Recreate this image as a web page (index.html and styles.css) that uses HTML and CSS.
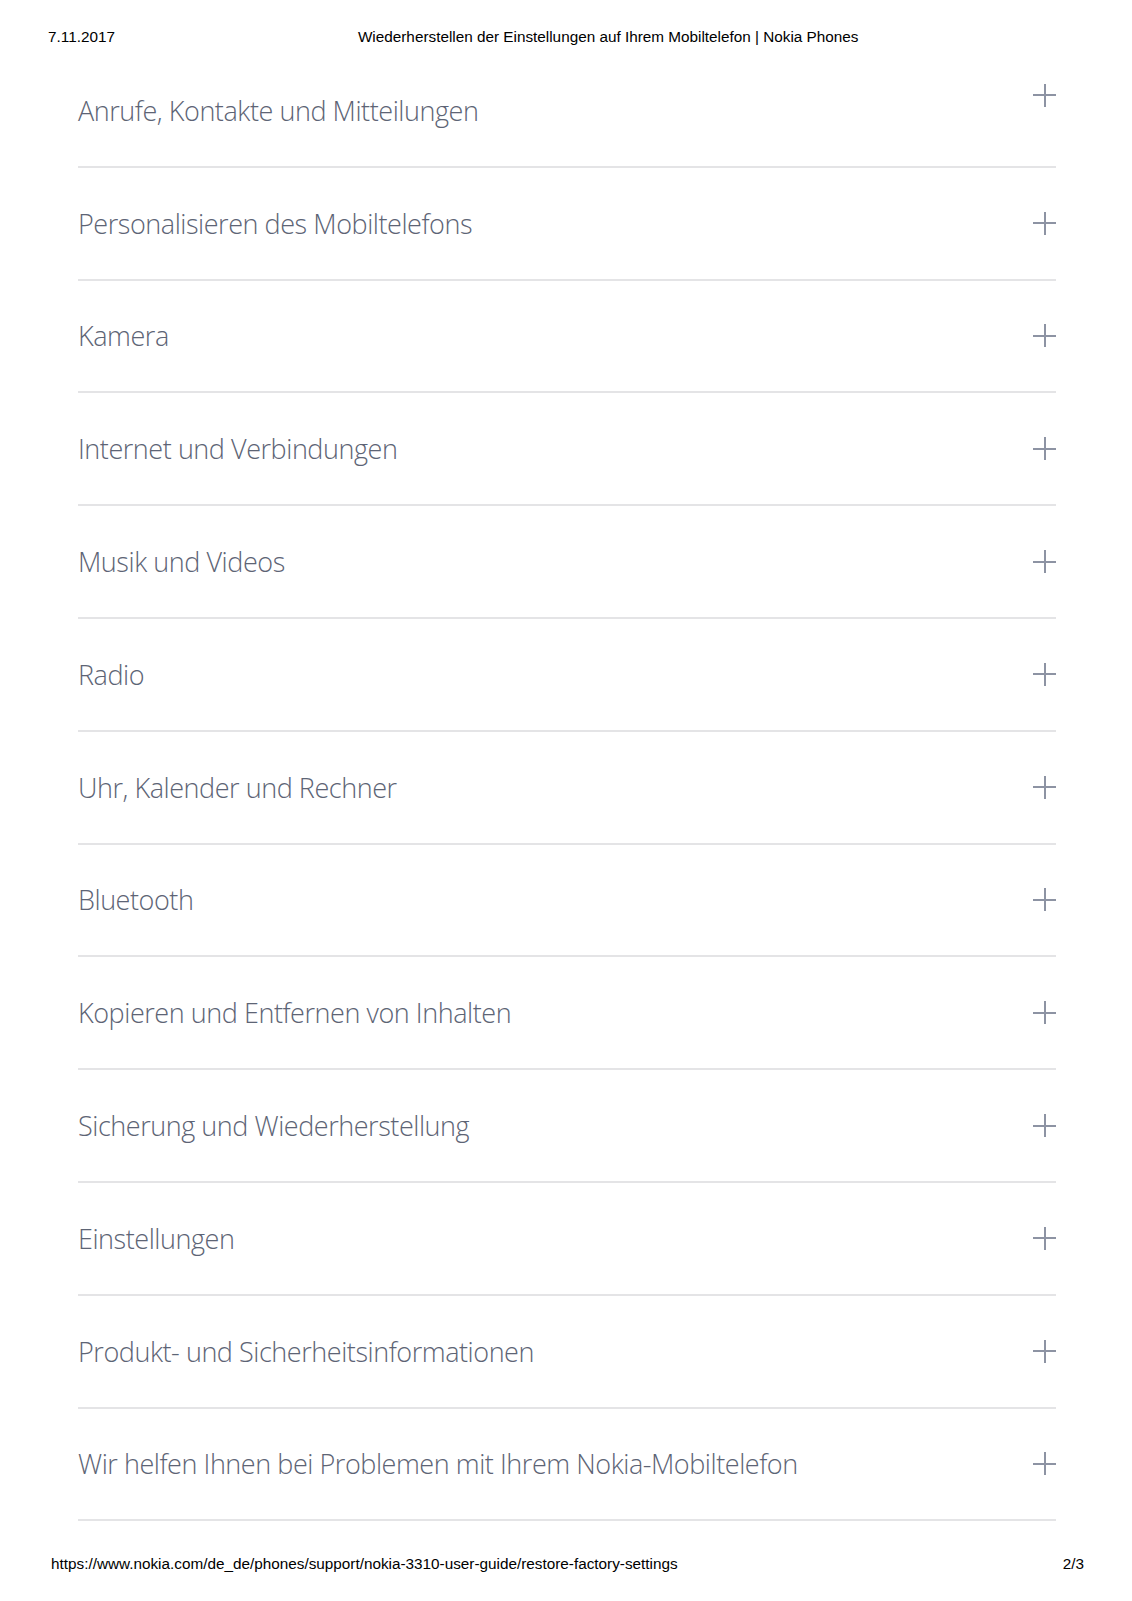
FILE: index.html
```html
<!DOCTYPE html>
<html lang="de">
<head>
<meta charset="utf-8">
<title>Wiederherstellen der Einstellungen auf Ihrem Mobiltelefon | Nokia Phones</title>
<link rel="stylesheet" href="styles.css">
</head>
<body>
<header class="print-head">
  <span class="print-date">7.11.2017</span>
  <span class="print-title">Wiederherstellen der Einstellungen auf Ihrem Mobiltelefon | Nokia Phones</span>
</header>
<main class="accordion">
  <div class="row row-first"><span class="label">Anrufe, Kontakte und Mitteilungen</span><span class="plus"></span></div>
  <div class="row"><span class="label">Personalisieren des Mobiltelefons</span><span class="plus"></span></div>
  <div class="row"><span class="label">Kamera</span><span class="plus"></span></div>
  <div class="row"><span class="label">Internet und Verbindungen</span><span class="plus"></span></div>
  <div class="row"><span class="label">Musik und Videos</span><span class="plus"></span></div>
  <div class="row"><span class="label">Radio</span><span class="plus"></span></div>
  <div class="row"><span class="label">Uhr, Kalender und Rechner</span><span class="plus"></span></div>
  <div class="row"><span class="label">Bluetooth</span><span class="plus"></span></div>
  <div class="row"><span class="label">Kopieren und Entfernen von Inhalten</span><span class="plus"></span></div>
  <div class="row"><span class="label">Sicherung und Wiederherstellung</span><span class="plus"></span></div>
  <div class="row"><span class="label">Einstellungen</span><span class="plus"></span></div>
  <div class="row"><span class="label">Produkt- und Sicherheitsinformationen</span><span class="plus"></span></div>
  <div class="row"><span class="label">Wir helfen Ihnen bei Problemen mit Ihrem Nokia-Mobiltelefon</span><span class="plus"></span></div>
</main>
<footer class="print-foot">
  <span class="print-url">https://www.nokia.com/de_de/phones/support/nokia-3310-user-guide/restore-factory-settings</span>
  <span class="print-page">2/3</span>
</footer>
</body>
</html>
```
FILE: styles.css
```css
html, body {
  margin: 0;
  padding: 0;
  background: #ffffff;
}

body {
  width: 1132px;
  font-family: "Liberation Sans", Arial, sans-serif;
  color: #000;
}

.print-head {
  display: flex;
  align-items: baseline;
  padding: 29px 0 0 48px;
  font-size: 15.3px;
  line-height: 16px;
  height: 16px;
}

.print-title {
  margin-left: 243px;
}

.accordion {
  margin: 10px 76px 0 78px;
}

.row {
  display: flex;
  align-items: center;
  justify-content: space-between;
  height: 110.8px;
  border-bottom: 2px solid #e4e4e6;
}

.label {
  font-family: "Open Sans", sans-serif;
  font-weight: 300;
  font-size: 27px;
  color: #5d6475;
  letter-spacing: -0.45px;
}

.plus {
  position: relative;
  width: 23px;
  height: 23px;
  flex: none;
}

.plus::before,
.plus::after {
  content: "";
  position: absolute;
  background: #8d93a3;
}

.plus::before {
  left: 0;
  right: 0;
  top: 10.5px;
  height: 2px;
}

.plus::after {
  top: 0;
  bottom: 0;
  left: 10.5px;
  width: 2px;
}

.row-first .plus {
  margin-top: -30px;
}

.print-foot {
  display: flex;
  justify-content: space-between;
  align-items: baseline;
  margin: 35px 48px 0 51px;
  font-size: 15.3px;
  line-height: 16px;
}
```
